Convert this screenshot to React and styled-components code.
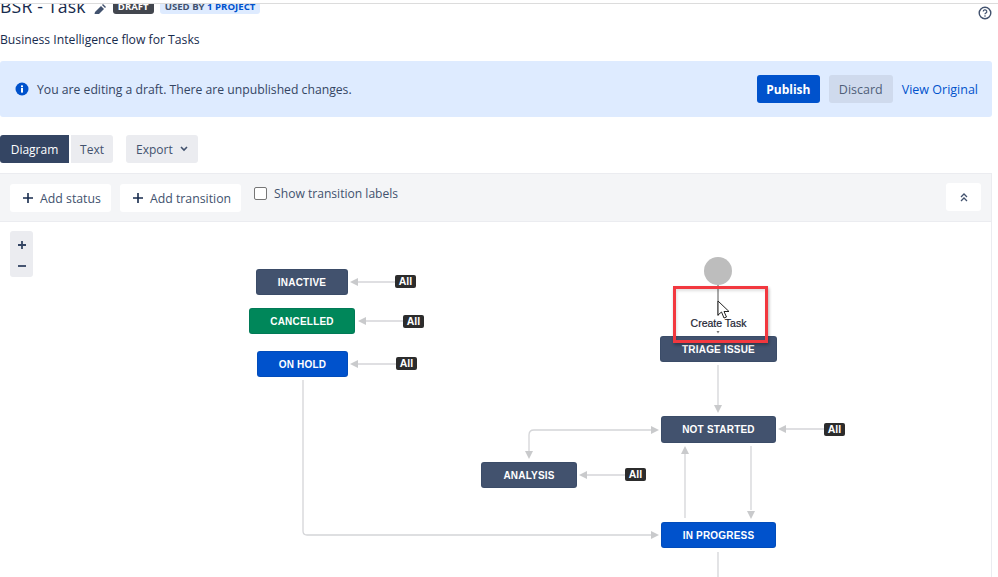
import React from "react";
import styled, { createGlobalStyle } from "styled-components";

const GlobalStyle = createGlobalStyle`
  html, body {
    margin: 0;
    padding: 0;
    background: #fff;
    overflow: hidden;
  }
  body {
    font-family: "Open Sans", "Noto Sans", sans-serif;
    color: #42526e;
  }
`;

const Page = styled.div`
  width: 998px;
  height: 577px;
  overflow: hidden;
  display: flex;
  flex-direction: column;
`;

const TopRule = styled.div`
  height: 4px;
  flex: none;
  background: #fff;
  border-bottom: 1px solid #dcdcdc;
  box-sizing: border-box;
`;

const Header = styled.div`
  height: 57px;
  flex: none;
  display: flex;
  justify-content: space-between;
  padding-right: 6px;
`;

const HeaderLeft = styled.div`
  display: flex;
  flex-direction: column;
`;

const TitleRow = styled.div`
  height: 10px;
  display: flex;
  align-items: flex-end;
  overflow: hidden;
`;

const Title = styled.span`
  font-size: 17.6px;
  line-height: 22px;
  height: 22px;
  margin-bottom: -3px;
  color: #172b4d;
  letter-spacing: 0.2px;
`;

const EditIcon = styled.svg`
  width: 13px;
  height: 13px;
  margin: 0 7px 0 7px;
  flex: none;
  align-self: flex-start;
`;

const Badge = styled.span`
  font-size: 9.6px;
  line-height: 14px;
  height: 14px;
  font-weight: 700;
  border-radius: 3px;
  padding: 0 5px;
  color: ${(p) => (p.$dark ? "#fff" : "#42526e")};
  background: ${(p) => (p.$dark ? "#42464e" : "#deebff")};
  margin-right: 6px;
  align-self: flex-end;
`;

const BadgeLink = styled.span`
  color: #0052cc;
`;

const Subtitle = styled.div`
  margin-top: 17px;
  font-size: 12.2px;
  line-height: 17px;
  color: #172b4d;
`;

const HelpIcon = styled.svg`
  width: 14px;
  height: 14px;
  margin-top: 2px;
  flex: none;
`;

const Notice = styled.div`
  height: 56px;
  width: 992px;
  flex: none;
  box-sizing: border-box;
  background: #deebff;
  border-radius: 3px;
  display: flex;
  align-items: center;
  padding: 0 14px 0 15px;
`;

const NoticeText = styled.span`
  margin-left: 8px;
  font-size: 12.2px;
  color: #344563;
  flex: 1;
`;

const Button = styled.button`
  font-family: inherit;
  font-size: 12px;
  height: 28px;
  border: none;
  border-radius: 3px;
  padding: 0 10px;
  display: inline-flex;
  align-items: center;
  background: #ebecf0;
  color: #42526e;
`;

const PublishButton = styled(Button)`
  width: 63px;
  padding: 0;
  justify-content: center;
  background: #0052cc;
  color: #fff;
  font-weight: 700;
`;

const DiscardButton = styled(Button)`
  background: #cfdaed;
  margin-left: 9px;
  font-size: 12.5px;
  color: #505f79;
`;

const TextLink = styled.span`
  font-size: 12.5px;
  color: #0052cc;
  margin-left: 9px;
`;

const ViewBar = styled.div`
  flex: none;
  height: 28px;
  margin-top: 18px;
  display: flex;
`;

const TabButton = styled(Button)`
  width: ${(p) => (p.$active ? "69px" : "42px")};
  padding: 0;
  justify-content: center;
  background: ${(p) => (p.$active ? "#344563" : "#ebecf0")};
  color: ${(p) => (p.$active ? "#fff" : "#42526e")};
  border-radius: ${(p) => (p.$active ? "3px 0 0 3px" : "0 3px 3px 0")};
  margin-right: ${(p) => (p.$active ? "2px" : "0")};
`;

const ExportButton = styled(Button)`
  margin-left: 13px;
  gap: 7px;
`;

const Panel = styled.div`
  flex: 1;
  width: 992px;
  box-sizing: border-box;
  margin-top: 10px;
  border-right: 1px solid #ebecf0;
  display: flex;
  flex-direction: column;
  min-height: 0;
`;

const Toolbar = styled.div`
  height: 49px;
  flex: none;
  box-sizing: border-box;
  background: #f4f5f7;
  border-top: 1px solid #ebecf0;
  border-bottom: 1px solid #ebecf0;
  display: flex;
  padding: 10px;
  gap: 9px;
`;

const ToolButton = styled(Button)`
  background: #fff;
  padding: 0 10px 0 12px;
  gap: 6px;
  font-size: 12.3px;
`;

const LabelCheck = styled.label`
  display: flex;
  align-items: center;
  font-size: 12.1px;
  margin-left: 4px;
  height: 18px;
  gap: 7px;
`;

const CheckBox = styled.span`
  width: 11px;
  height: 11px;
  border: 1px solid #767676;
  border-radius: 2px;
  background: #fff;
`;

const CollapseButton = styled(Button)`
  margin-left: auto;
  margin-top: -1px;
  background: #fff;
  width: 35px;
  justify-content: center;
  padding: 0;
`;

const Canvas = styled.div`
  position: relative;
  flex: 1;
  overflow: hidden;
`;

const ZoomGroup = styled.div`
  position: absolute;
  left: 10px;
  top: 9px;
  width: 23px;
  height: 46px;
  box-sizing: border-box;
  padding: 3px 0 0;
  border-radius: 3px;
  background: #ebecf0;
  display: flex;
  flex-direction: column;
  align-items: center;
  justify-content: space-around;
  color: #42526e;
`;

const Edges = styled.svg`
  position: absolute;
  left: 0;
  top: -222px;
  width: 998px;
  height: 577px;
`;

const statusColors = {
  grey: "#42526e",
  green: "#00875a",
  blue: "#0052cc",
};

const Node = styled.div`
  position: absolute;
  box-sizing: border-box;
  display: flex;
  align-items: center;
  justify-content: center;
  border-radius: 3px;
  border: 1px solid rgba(9, 30, 66, 0.12);
  background: ${(p) => statusColors[p.$tone]};
  color: #fff;
  font-family: "Liberation Sans", Arial, sans-serif;
  font-size: 10px;
  font-weight: 700;
  letter-spacing: 0.2px;
`;

const AllTag = styled.div`
  position: absolute;
  width: 21px;
  height: 13px;
  border-radius: 2px;
  background: #2c2c2c;
  color: #fff;
  font-family: "Liberation Sans", Arial, sans-serif;
  font-size: 10.5px;
  font-weight: 700;
  line-height: 13px;
  text-align: center;
`;

const Annotation = styled.div`
  position: absolute;
  left: 673px;
  top: 64px;
  width: 95px;
  height: 57px;
  box-sizing: border-box;
  border: 3px solid #f2383f;
  box-shadow: 1px 2px 3px rgba(0, 0, 0, 0.3), inset 1px 2px 3px rgba(0, 0, 0, 0.12);
`;

const TransitionLabel = styled.div`
  position: absolute;
  left: 660px;
  top: 95px;
  width: 117px;
  text-align: center;
  font-family: "Liberation Sans", Arial, sans-serif;
  font-size: 10.5px;
  line-height: 13px;
  color: #1c2433;
  -webkit-text-stroke: 0.2px #1c2433;
`;

const Cursor = styled.svg`
  position: absolute;
  left: 717px;
  top: 78px;
  width: 13px;
  height: 19px;
`;

const nodes = [
  { label: "INACTIVE", tone: "grey", x: 256, y: 269, w: 92, h: 26 },
  { label: "CANCELLED", tone: "green", x: 249, y: 308, w: 106, h: 26 },
  { label: "ON HOLD", tone: "blue", x: 257, y: 351, w: 91, h: 26 },
  { label: "TRIAGE ISSUE", tone: "grey", x: 660, y: 336, w: 117, h: 26 },
  { label: "NOT STARTED", tone: "grey", x: 661, y: 416, w: 115, h: 27 },
  { label: "ANALYSIS", tone: "grey", x: 481, y: 462, w: 96, h: 26 },
  { label: "IN PROGRESS", tone: "blue", x: 661, y: 522, w: 115, h: 26 },
];

const tags = [
  [395, 275],
  [403, 315],
  [396, 357],
  [824, 423],
  [625, 468],
];

const lines = [
  "M395 282H358",
  "M403 321H365",
  "M396 364H358",
  "M824 429H786",
  "M625 475H587",
  "M718 365V406",
  "M685 518V453",
  "M751 446V510",
  "M303 380V531Q303 535 307 535H651",
  "M651 430H534Q529 430 529 435V452",
  "M718 552V577",
];

// arrow heads: tip x, tip y, direction
const heads = [
  [350, 282, "l"],
  [358, 321, "l"],
  [350, 364, "l"],
  [778, 429, "l"],
  [579, 475, "l"],
  [718, 413, "d"],
  [685, 446, "u"],
  [751, 519, "d"],
  [659, 535, "r"],
  [659, 430, "r"],
  [529, 459, "d"],
];

const headPath = ([x, y, d]) => {
  if (d === "l") return `M${x} ${y}l8 -4v8z`;
  if (d === "r") return `M${x} ${y}l-8 -4v8z`;
  if (d === "u") return `M${x} ${y}l-4 8h8z`;
  return `M${x} ${y}l-4 -8h8z`;
};

const Plus = () => (
  <svg width="12" height="12" viewBox="0 0 12 12">
    <path d="M6 1v10M1 6h10" stroke="#172b4d" strokeWidth="1.6" />
  </svg>
);

const App = () => {
  return (
    <Page>
      <GlobalStyle />
      <TopRule />
      <Header>
        <HeaderLeft>
          <TitleRow>
            <Title>BSR - Task</Title>
            <EditIcon viewBox="0 0 13 13">
              <path d="M1 12l1-4 6-6 3 3-6 6z" fill="#42526e" />
              <path d="M9 1l1-1 3 3-1 1z" fill="#42526e" />
            </EditIcon>
            <Badge $dark>DRAFT</Badge>
            <Badge>
              USED BY <BadgeLink>1 PROJECT</BadgeLink>
            </Badge>
          </TitleRow>
          <Subtitle>Business Intelligence flow for Tasks</Subtitle>
        </HeaderLeft>
        <HelpIcon viewBox="0 0 14 14">
          <circle cx="7" cy="7" r="5.8" fill="none" stroke="#42526e" strokeWidth="1.4" />
          <path d="M5.2 5.6a1.8 1.7 0 1 1 2.6 1.5q-.8.5-.8 1.2" fill="none" stroke="#42526e" strokeWidth="1.2" />
          <circle cx="7" cy="10" r=".8" fill="#42526e" />
        </HelpIcon>
      </Header>

      <Notice>
        <svg width="14" height="14" viewBox="0 0 14 14">
          <circle cx="7" cy="7" r="6.5" fill="#0052cc" />
          <rect x="6" y="6" width="2" height="4.6" fill="#fff" />
          <rect x="6" y="3.4" width="2" height="1.8" fill="#fff" />
        </svg>
        <NoticeText>You are editing a draft. There are unpublished changes.</NoticeText>
        <PublishButton>Publish</PublishButton>
        <DiscardButton>Discard</DiscardButton>
        <TextLink>View Original</TextLink>
      </Notice>

      <ViewBar>
        <TabButton $active>Diagram</TabButton>
        <TabButton>Text</TabButton>
        <ExportButton>
          Export
          <svg width="8" height="6" viewBox="0 0 8 6">
            <path d="M1 1l3 3 3-3" fill="none" stroke="#42526e" strokeWidth="1.6" />
          </svg>
        </ExportButton>
      </ViewBar>

      <Panel>
        <Toolbar>
          <ToolButton>
            <Plus />
            Add status
          </ToolButton>
          <ToolButton>
            <Plus />
            Add transition
          </ToolButton>
          <LabelCheck>
            <CheckBox />
            Show transition labels
          </LabelCheck>
          <CollapseButton>
            <svg width="10" height="10" viewBox="0 0 10 10">
              <path d="M2 5l3-3 3 3M2 9l3-3 3 3" fill="none" stroke="#42526e" strokeWidth="1.3" />
            </svg>
          </CollapseButton>
        </Toolbar>

        <Canvas>
          <ZoomGroup>
            <svg width="10" height="10" viewBox="0 0 10 10">
              <path d="M5 1v8M1 5h8" stroke="#344563" strokeWidth="1.8" />
            </svg>
            <svg width="10" height="10" viewBox="0 0 10 10">
              <path d="M1 5h8" stroke="#344563" strokeWidth="1.8" />
            </svg>
          </ZoomGroup>
          <Edges viewBox="0 0 998 577">
            <circle cx="718" cy="271" r="14" fill="#bdbdbd" />
            <path d="M718 285V316" stroke="#555" strokeWidth="1" />
            {lines.map((d) => (
              <path key={d} d={d} fill="none" stroke="#d4d5d8" strokeWidth="1.3" />
            ))}
            {heads.map((h) => (
              <path key={h.join()} d={headPath(h)} fill="#c9cacc" />
            ))}
            <path d="M716.5 331h3l-1.5 2.5z" fill="#777" />
          </Edges>
          {nodes.map((n) => (
            <Node
              key={n.label}
              $tone={n.tone}
              style={{ left: n.x, top: n.y - 222, width: n.w, height: n.h }}
            >
              {n.label}
            </Node>
          ))}
          {tags.map(([x, y]) => (
            <AllTag key={x} style={{ left: x, top: y - 222 }}>
              All
            </AllTag>
          ))}
          <Annotation />
          <TransitionLabel>Create Task</TransitionLabel>
          <Cursor viewBox="0 0 13 19">
            <path d="M1 1v14l3.5-3 2.5 6 2.5-1-2.5-5.5h5z" fill="#fff" stroke="#222" strokeWidth="1" />
          </Cursor>
        </Canvas>
      </Panel>
    </Page>
  );
};

export default App;
